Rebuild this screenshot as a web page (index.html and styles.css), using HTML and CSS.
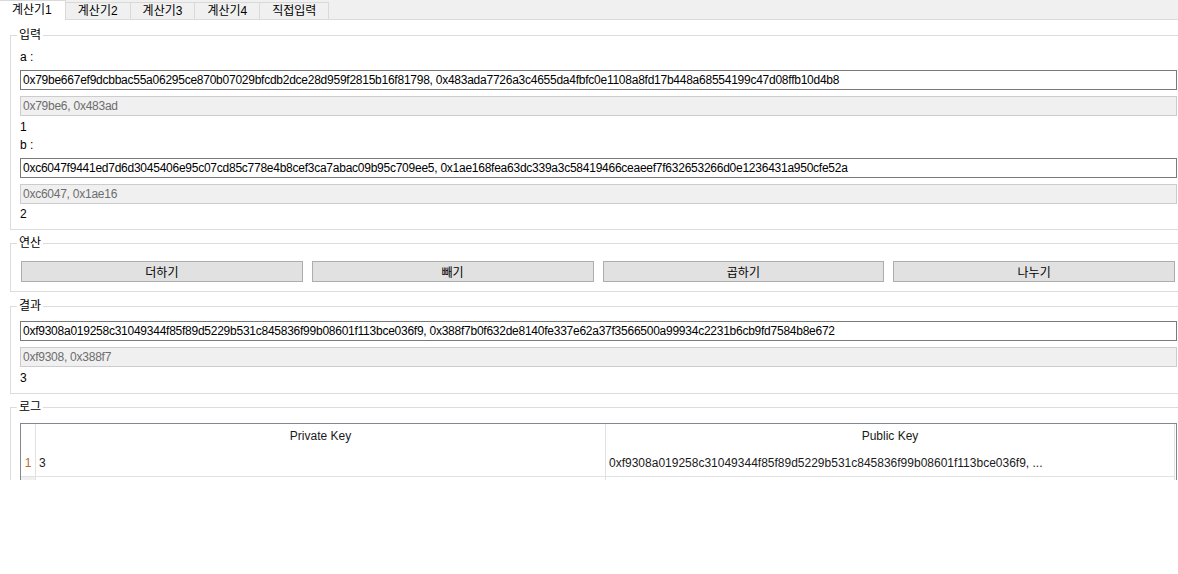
FILE: index.html
```html
<!DOCTYPE html>
<html>

<head>
    <title>ECC 계산기</title>
    <link rel="stylesheet" href="styles.css">
</head>

<body>
    <div class="window">
        <div class="tabs">
            <div class="tab active">계산기1</div>
            <div class="tab">계산기2</div>
            <div class="tab">계산기3</div>
            <div class="tab">계산기4</div>
            <div class="tab">직접입력</div>
        </div>
        <div class="page">
            <fieldset class="group group-input">
                <legend>입력</legend>
                <div class="caption">a :</div>
                <input class="field" type="text" value="0x79be667ef9dcbbac55a06295ce870b07029bfcdb2dce28d959f2815b16f81798, 0x483ada7726a3c4655da4fbfc0e1108a8fd17b448a68554199c47d08ffb10d4b8" />
                <input class="field short" type="text" value="0x79be6, 0x483ad" disabled />
                <div class="caption value">1</div>
                <div class="caption spaced">b :</div>
                <input class="field" type="text" value="0xc6047f9441ed7d6d3045406e95c07cd85c778e4b8cef3ca7abac09b95c709ee5, 0x1ae168fea63dc339a3c58419466ceaeef7f632653266d0e1236431a950cfe52a" />
                <input class="field short" type="text" value="0xc6047, 0x1ae16" disabled />
                <div class="caption value last">2</div>
            </fieldset>

            <fieldset class="group group-ops">
                <legend>연산</legend>
                <div class="buttons">
                    <button type="button">더하기</button>
                    <button type="button">빼기</button>
                    <button type="button">곱하기</button>
                    <button type="button">나누기</button>
                </div>
            </fieldset>

            <fieldset class="group group-result">
                <legend>결과</legend>
                <input class="field" type="text" value="0xf9308a019258c31049344f85f89d5229b531c845836f99b08601f113bce036f9, 0x388f7b0f632de8140fe337e62a37f3566500a99934c2231b6cb9fd7584b8e672" />
                <input class="field short" type="text" value="0xf9308, 0x388f7" disabled />
                <div class="caption value last">3</div>
            </fieldset>

            <fieldset class="group group-log">
                <legend>로그</legend>
                <div class="grid-view">
                    <table>
                        <colgroup>
                            <col class="col-rownum">
                            <col class="col-private">
                            <col>
                        </colgroup>
                        <thead>
                            <tr>
                                <th class="row-head"></th>
                                <th>Private Key</th>
                                <th>Public Key</th>
                            </tr>
                        </thead>
                        <tbody>
                            <tr>
                                <td class="row-head">1</td>
                                <td>3</td>
                                <td>0xf9308a019258c31049344f85f89d5229b531c845836f99b08601f113bce036f9, ...</td>
                            </tr>
                            <tr class="new-row">
                                <td class="row-head"></td>
                                <td></td>
                                <td></td>
                            </tr>
                        </tbody>
                    </table>
                </div>
            </fieldset>
        </div>
    </div>
</body>

</html>
```

FILE: styles.css
```css
body {
    margin: 0;
    background-color: #fff;
    font-family: "Liberation Sans", "Noto Sans CJK KR", sans-serif;
    font-size: 12px;
    color: #000;
}

.window {
    height: 480px;
    overflow: hidden;
}

/* tab strip */
.tabs {
    display: flex;
    align-items: flex-end;
    height: 19px;
    background-color: #f0f0f0;
}

.tab {
    height: 17px;
    line-height: 16px;
    padding: 0 12px;
    box-sizing: border-box;
    background-color: #f0f0f0;
    border: 1px solid #d9d9d9;
    border-bottom: none;
    border-left: none;
}

.tab.active {
    height: 20px;
    line-height: 19px;
    margin-bottom: -1px;
    padding: 0 13px 0 12px;
    background-color: #fff;
    position: relative;
}

.page {
    border-top: 1px solid #dadada;
    background-color: #fff;
}

/* group boxes */
.group {
    margin: 0 -3px 0 10px;
    padding: 0 3px 8px 9px;
    border: 1px solid #dcdcdc;
    min-width: 0;
}

.group legend {
    margin-left: -3px;
    padding: 0 2px;
    line-height: 14px;
}

.group-input {
    margin-top: 8px;
    padding-top: 8px;
}

.group-ops {
    margin-top: 6px;
    padding-top: 11px;
    padding-bottom: 9px;
}

.group-result {
    margin-top: 7px;
    padding-top: 8px;
}

.group-log {
    margin-top: 6px;
    padding-top: 9px;
    padding-bottom: 0;
    height: 200px;
}

.caption {
    line-height: 14px;
}

.caption.value,
.caption.spaced {
    margin-top: 4px;
}

.caption.last {
    margin-top: 3px;
}

.group-result .caption.last {
    margin-top: 4px;
}

.caption + .field {
    margin-top: 6px;
}

.field {
    display: block;
    width: 100%;
    height: 20px;
    margin: 0;
    padding: 0 2px;
    box-sizing: border-box;
    border: 1px solid #7a7a7a;
    font-family: "Liberation Sans", sans-serif;
    font-size: 12px;
    letter-spacing: -0.25px;
    color: #000;
    background-color: #fff;
}

.field.short {
    margin-top: 6px;
    border-color: #cccccc;
    background-color: #f0f0f0;
    color: #6d6d6d;
}

/* operation buttons */
.buttons {
    display: grid;
    grid-template-columns: repeat(4, 1fr);
    gap: 9px;
    margin: 0 2px 0 1px;
}

.buttons button {
    height: 21px;
    padding: 0;
    border: 1px solid #adadad;
    background-color: #e1e1e1;
    font-family: "Liberation Sans", "Noto Sans CJK KR", sans-serif;
    font-size: 12px;
    color: #000;
}

/* log grid */
.grid-view {
    border: 1px solid #828790;
    border-bottom: none;
    padding-right: 1px;
    height: 100px;
}

.grid-view table {
    width: 100%;
    table-layout: fixed;
    border-collapse: separate;
    border-spacing: 0;
}

.col-rownum {
    width: 15px;
}

.col-private {
    width: 570px;
}

.grid-view th {
    height: 24px;
    padding: 0 0 3px;
    font-weight: normal;
    text-align: center;
    border-right: 1px solid #e2e2e2;
    color: #1a1a1a;
}

.grid-view td {
    height: 23px;
    padding: 0 0 2px 3px;
    border-right: 1px solid #e2e2e2;
    border-bottom: 1px solid #e2e2e2;
    white-space: nowrap;
    overflow: hidden;
    color: #1a1a1a;
}

.grid-view .row-head {
    padding: 0 0 2px;
    text-align: center;
    color: #b86e22;
}

.grid-view .new-row .row-head {
    background-color: #f0f0f0;
}
```
